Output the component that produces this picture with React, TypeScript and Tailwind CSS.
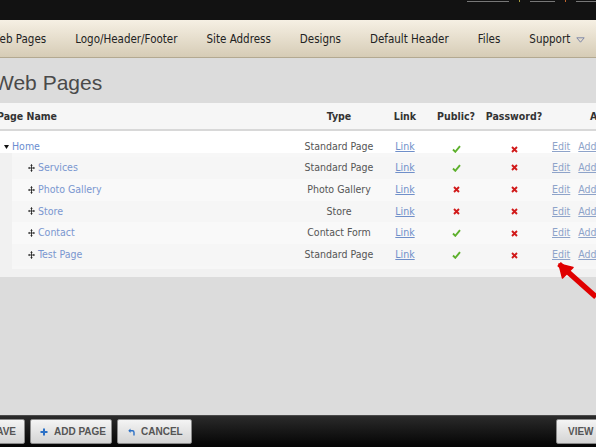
import React from "react";

const VERD = "font-['DejaVu_Sans_Condensed','DejaVu_Sans',sans-serif]";
const ARIAL = "font-['Liberation_Sans',Arial,sans-serif]";

const navItems = [
  "Web Pages",
  "Logo/Header/Footer",
  "Site Address",
  "Designs",
  "Default Header",
  "Files",
];

type Row = {
  name: string;
  type: string;
  pub: boolean;
  pass: boolean;
};

const children: Row[] = [
  { name: "Services", type: "Standard Page", pub: true, pass: false },
  { name: "Photo Gallery", type: "Photo Gallery", pub: false, pass: false },
  { name: "Store", type: "Store", pub: false, pass: false },
  { name: "Contact", type: "Contact Form", pub: true, pass: false },
  { name: "Test Page", type: "Standard Page", pub: true, pass: false },
];

function Check() {
  return (
    <svg width="9" height="8" viewBox="0 0 9 8" className="inline-block">
      <path d="M1 4.5 L3.3 6.8 L8 1.2" fill="none" stroke="#5db02c" strokeWidth="1.9" />
    </svg>
  );
}

function Cross() {
  return (
    <svg width="7" height="7" viewBox="0 0 7 7" className="inline-block">
      <path d="M1 1 L6 6 M6 1 L1 6" stroke="#d11a1a" strokeWidth="1.9" />
    </svg>
  );
}

function Move() {
  return (
    <svg width="7" height="8" viewBox="0 0 8 9" className="inline-block">
      <path d="M4 0.5 V8.5 M0.5 4.5 H7.5" stroke="#222" strokeWidth="1" />
      <path d="M2.5 2 L4 0.3 L5.5 2 Z M2.5 7 L4 8.7 L5.5 7 Z M1.8 3 L0.2 4.5 L1.8 6 Z M6.2 3 L7.8 4.5 L6.2 6 Z" fill="#222" />
    </svg>
  );
}

function Cells({ row }: { row: Row }) {
  return (
    <>
      <div className="w-[78px] shrink-0 text-center text-[#555]">{row.type}</div>
      <div className="w-[54px] shrink-0 text-center">
        <span className="text-[#6f8fc9] underline">Link</span>
      </div>
      <div className="flex w-[48px] shrink-0 justify-center">{row.pub ? <Check /> : <Cross />}</div>
      <div className="flex w-[68px] shrink-0 justify-center">{row.pass ? <Check /> : <Cross />}</div>
      <div className="flex shrink-0 gap-[8px] pl-[4px] text-[#8ea3c9]">
        <span className="underline">Edit</span>
        <span className="underline">Add</span>
      </div>
    </>
  );
}

export default function App() {
  return (
    <div className={`relative flex h-[447px] w-[596px] flex-col overflow-hidden bg-[#dcdcdc] ${VERD}`}>
      {/* top strip */}
      <div className="flex h-[20px] shrink-0 items-start bg-[#121212] pl-[467px]">
        <div className="mt-[1px] h-px w-[43px] bg-[#777]" />
        <div className="ml-[10px] h-[2px] w-px bg-[#a39a3a]" />
        <div className="ml-[10px] mt-[1px] h-px w-[26px] bg-[#777]" />
        <div className="ml-[10px] h-[2px] w-px bg-[#c0642c]" />
        <div className="ml-[10px] mt-[1px] h-px w-[20px] bg-[#777]" />
      </div>

      {/* nav */}
      <div className="flex h-[38px] shrink-0 items-center border-b border-[#b3a991] bg-gradient-to-b from-[#f6f0e4] to-[#d6ccb6] pt-[3px] text-[11.5px] text-[#222]">
        <div className="-ml-[10px] flex items-center gap-[29px] whitespace-nowrap">
          {navItems.map((n) => (
            <span key={n}>{n}</span>
          ))}
          <span className="flex items-center gap-[6px]">
            Support
            <svg width="9" height="6" viewBox="0 0 9 6">
              <path d="M0.8 0.8 H8.2 L4.5 5.2 Z" fill="none" stroke="#7f88a8" strokeWidth="1" />
            </svg>
          </span>
        </div>
      </div>

      {/* main */}
      <div className="flex flex-1 flex-col">
        <h1 className={`-ml-[6px] mt-[13px] h-[32px] text-[21px] leading-[24px] text-[#4a4a4a] ${ARIAL}`}>
          Web Pages
        </h1>

        <div className="w-[620px] bg-[#f1f1f1] pb-[8px] text-[10.5px]">
          {/* header */}
          <div className="flex h-[28px] items-center border-b-2 border-[#d8d8d8] bg-[#f6f6f6] pt-[1px] font-bold text-[#333]">
            <div className="-ml-[3px] w-[303px] shrink-0">Page Name</div>
            <div className="w-[78px] shrink-0 text-center">Type</div>
            <div className="w-[54px] shrink-0 text-center">Link</div>
            <div className="w-[48px] shrink-0 text-center">Public?</div>
            <div className="w-[68px] shrink-0 text-center">Password?</div>
            <div className="pl-[42px]">Actions</div>
          </div>

          {/* home row */}
          <div className="flex h-[22px] items-end bg-white leading-[13px]">
            <div className="flex w-[300px] shrink-0 items-center gap-[3px] pl-[4px]">
              <svg width="5" height="4" viewBox="0 0 5 4">
                <path d="M0 0 H5 L2.5 4 Z" fill="#111" />
              </svg>
              <span className="text-[#6a8dd0]">Home</span>
            </div>
            <Cells row={{ name: "Home", type: "Standard Page", pub: true, pass: false }} />
          </div>

          {/* children */}
          <div className="ml-[12px] bg-[#f7f7f7] pb-[3px] pt-[4px]">
            {children.map((c) => (
              <div key={c.name} className="flex h-[21.8px] items-center odd:bg-[#f6f6f6] even:bg-[#f9f9f9]">
                <div className="flex w-[288px] shrink-0 items-center gap-[3px] pl-[16px]">
                  <Move />
                  <span className="text-[#7a97d0]">{c.name}</span>
                </div>
                <Cells row={c} />
              </div>
            ))}
          </div>
        </div>
      </div>

      {/* bottom toolbar */}
      <div className={`flex h-[32px] shrink-0 items-center whitespace-nowrap border-t border-[#4a4a4a] bg-gradient-to-b from-[#2b2b2b] to-[#050505] text-[10px] font-bold text-[#555] ${ARIAL}`}>
        <div className="-ml-[30px] flex items-center gap-[5px]">
          <button className="flex h-[25px] w-[55px] items-center justify-end rounded-[2px] border border-[#8a8a8a] bg-gradient-to-b from-[#f4f4f4] to-[#d4d4d4] pr-[8px]">
            SAVE
          </button>
          <button className="flex h-[25px] w-[82px] items-center gap-[6px] rounded-[2px] border border-[#8a8a8a] bg-gradient-to-b from-[#f4f4f4] to-[#d4d4d4] pl-[9px]">
            <svg width="8" height="8" viewBox="0 0 8 8" className="shrink-0">
              <path d="M4 0.5 V7.5 M0.5 4 H7.5" stroke="#2b70c6" strokeWidth="2" />
            </svg>
            <span>ADD PAGE</span>
          </button>
          <button className="flex h-[25px] w-[75px] items-center gap-[6px] rounded-[2px] border border-[#8a8a8a] bg-gradient-to-b from-[#f4f4f4] to-[#d4d4d4] pl-[10px]">
            <svg width="7" height="8" viewBox="0 0 7 8" className="shrink-0">
              <path d="M2.5 0.5 L0.3 2.8 L2.5 5 Z" fill="#2b70c6" />
              <path d="M2 2.8 H4.5 Q6 2.8 6 4.5 V7.5" fill="none" stroke="#2b70c6" strokeWidth="1.4" />
            </svg>
            <span>CANCEL</span>
          </button>
        </div>
        <button className="ml-auto -mr-[10px] flex h-[25px] w-[50px] items-center rounded-[2px] border border-[#8a8a8a] bg-gradient-to-b from-[#f4f4f4] to-[#d4d4d4] pl-[11px]">
          VIEW
        </button>
      </div>

      {/* annotation arrow */}
      <svg className="absolute left-[550px] top-[255px]" width="46" height="46" viewBox="0 0 46 46">
        <path d="M9 9 L46 42" stroke="#e00000" strokeWidth="5.5" />
        <path d="M9 9 L23 12.5 L12.5 23 Z" fill="#e00000" stroke="#e00000" strokeWidth="1.5" strokeLinejoin="round" />
      </svg>
    </div>
  );
}
